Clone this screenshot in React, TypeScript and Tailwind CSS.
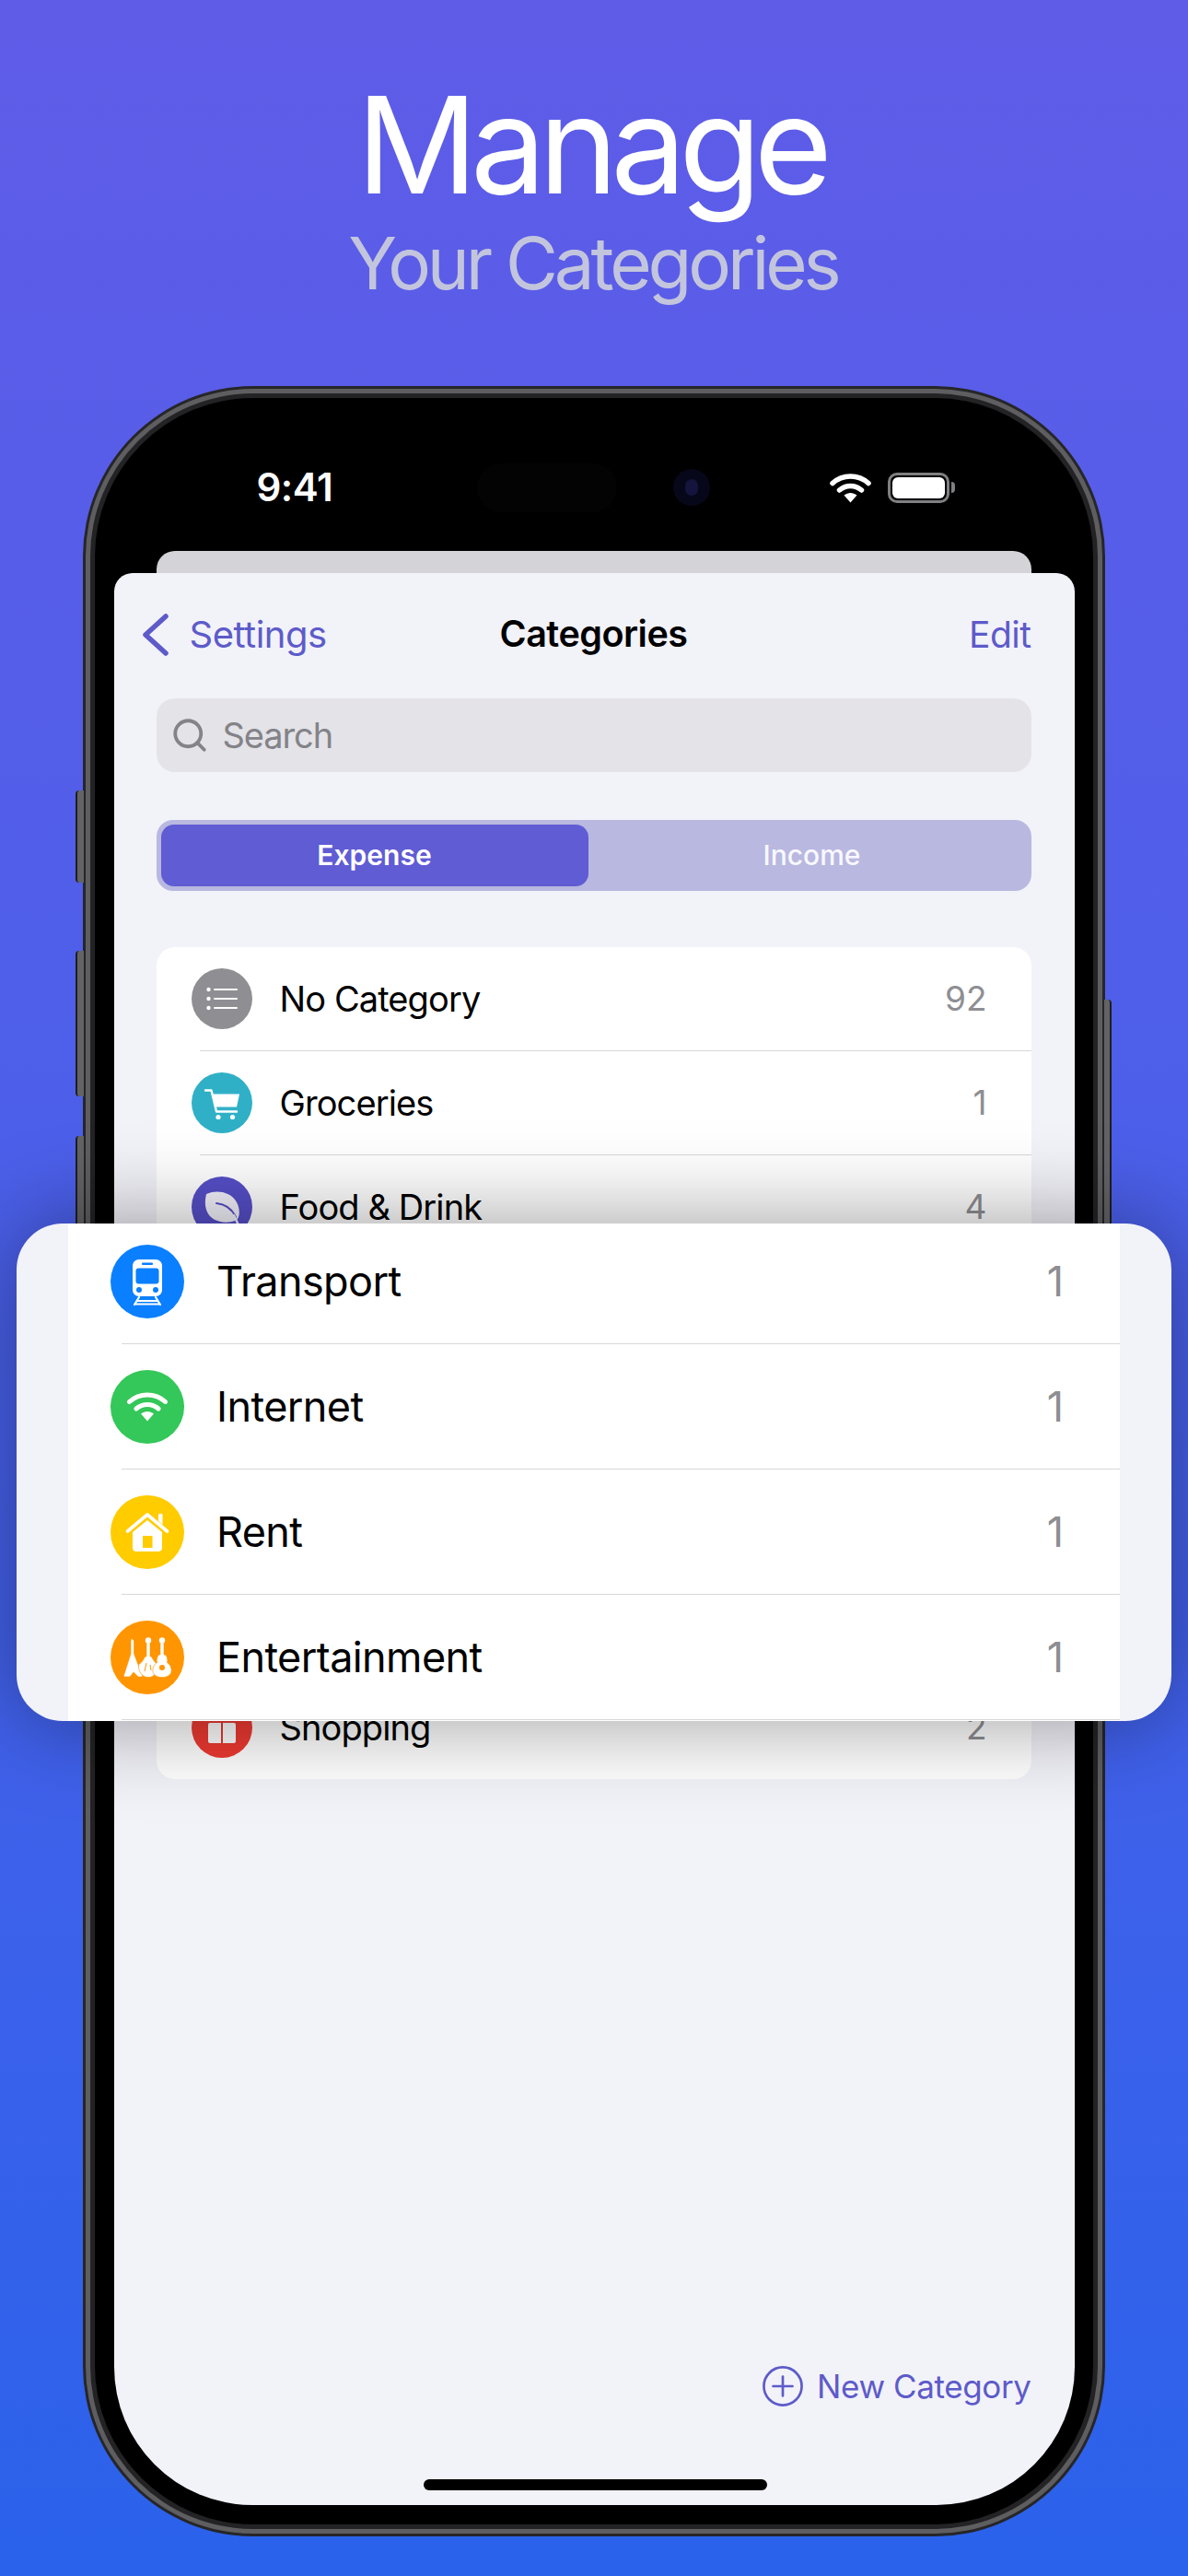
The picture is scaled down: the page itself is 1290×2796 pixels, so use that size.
import type { ReactNode } from "react";
import { Search } from "lucide-react";

type Category = {
  name: string;
  count: number;
  color: string;
  icon: ReactNode;
};

const WifiGlyph = ({ className, color = "white" }: { className: string; color?: string }) => (
  <svg viewBox="0 0 45 33" className={className} fill="none">
    <path d="M3 11.5C14 1.5 31 1.5 42 11.5" stroke={color} strokeWidth="5.5" strokeLinecap="round" />
    <path d="M10.5 19C17.5 13 27.5 13 34.5 19" stroke={color} strokeWidth="5.5" strokeLinecap="round" />
    <path d="M15.5 24.5C20 21 25 21 29.5 24.5L22.5 32.5Z" fill={color} />
  </svg>
);

const ListIcon = () => (
  <svg viewBox="0 0 66 66" className="w-full h-full" fill="none">
    <circle cx="18.5" cy="23" r="2.2" fill="white" />
    <circle cx="18.5" cy="33" r="2.2" fill="white" />
    <circle cx="18.5" cy="43" r="2.2" fill="white" />
    <path d="M25 23H49M25 33H49M25 43H49" stroke="white" strokeWidth="2" strokeLinecap="round" />
  </svg>
);

const CartIcon = () => (
  <svg viewBox="0 0 66 66" className="w-full h-full" fill="none">
    <path d="M15 19.5H21.5L27 42.5H49" stroke="white" strokeWidth="2.4" strokeLinecap="round" strokeLinejoin="round" />
    <path d="M23 23.5H52L49 37.5H26.5Z" fill="white" />
    <circle cx="29" cy="48.5" r="2.6" fill="white" />
    <circle cx="44.5" cy="48.5" r="2.6" fill="white" />
  </svg>
);

const LeafIcon = () => (
  <svg viewBox="0 0 66 66" className="w-full h-full" fill="none">
    <path d="M16 19C30 13 47 18 51 33C53 41 51 47 47 48C36 52 20 49 16 36C14 30 15 24 16 19Z" fill="#f4f3fc" />
    <path d="M27 29C36 30 44 35 48 44" stroke="#564fc9" strokeWidth="2" strokeLinecap="round" />
    <path d="M46 42C48 46 50 51 52 55" stroke="#f4f3fc" strokeWidth="2.5" strokeLinecap="round" />
  </svg>
);

const GiftIcon = () => (
  <svg viewBox="0 0 66 66" className="w-full h-full">
    <rect x="14" y="17" width="38" height="9" rx="2" fill="white" />
    <rect x="18" y="28" width="30" height="22" rx="2" fill="white" />
    <rect x="32" y="17" width="2" height="33" fill="#e5372f" />
  </svg>
);

const TrainIcon = () => (
  <svg viewBox="0 0 80 80" className="w-full h-full">
    <path d="M31 16H49C53 16 56 19 56 23V49C56 53 53 56 49 56H31C27 56 24 53 24 49V23C24 19 27 16 31 16Z" fill="white" />
    <rect x="27.5" y="25.5" width="25" height="17" rx="3" fill="#0a7fff" />
    <rect x="34" y="19.5" width="12" height="2.5" rx="1" fill="#0a7fff" />
    <circle cx="31" cy="49" r="3" fill="#0a7fff" />
    <circle cx="49" cy="49" r="3" fill="#0a7fff" />
    <path d="M31 57L26 65M49 57L54 65M29 61H51M27 64.5H53" stroke="white" strokeWidth="2.2" strokeLinecap="round" />
  </svg>
);

const HouseIcon = () => (
  <svg viewBox="0 0 80 80" className="w-full h-full" fill="none">
    <path d="M18.5 39L40 21L61.5 39" stroke="white" strokeWidth="3.6" strokeLinecap="round" strokeLinejoin="round" />
    <path d="M52 28V21.5C52 20.5 52.5 20 53.5 20H55C56 20 56.5 20.5 56.5 21.5V32Z" fill="white" />
    <path d="M40 27L56 40V57C56 59.5 54.5 61 52 61H28C25.5 61 24 59.5 24 57V40Z" fill="white" />
    <rect x="35" y="44" width="10.5" height="13" fill="#ffcc00" />
  </svg>
);

const GuitarsIcon = () => (
  <svg viewBox="0 0 80 80" className="w-full h-full" fill="white" stroke="#ff9500" strokeWidth="0.6">
    <path d="M23 19L25.5 22V36L35 61H30L25 56L21 61H14L22 36V22Z" />
    <path d="M39 24H43V39H44.5C46 43 49 46 51.5 48C52 55 48 61.5 41 61.5C34 61.5 30 55 30.5 48C33 46 36 43 37.5 39H39Z" />
    <circle cx="41" cy="21.5" r="3.2" stroke="none" />
    <path d="M54 24H58V37H59.5C61.5 39 62.5 43 61.5 45.5C66 48 68 56 64 59C62 61 58.5 61.5 56 61.5C53.5 61.5 50 61 48 59C44 56 46 48 50.5 45.5C49.5 43 50.5 39 52.5 37H54Z" />
    <circle cx="56" cy="21.5" r="3.2" stroke="none" />
    <circle cx="56" cy="51" r="3" fill="#ff9500" stroke="none" />
    <path d="M39 46L37 55M43 48L44 54" fill="none" strokeWidth="1" />
  </svg>
);

const WifiIcon = () => (
  <svg viewBox="0 0 80 80" className="w-full h-full">
    <svg x="17.5" y="23" width="45" height="33" viewBox="0 0 45 33">
      <path d="M3 11.5C14 1.5 31 1.5 42 11.5" stroke="white" strokeWidth="5" strokeLinecap="round" fill="none" />
      <path d="M10.5 19C17.5 13 27.5 13 34.5 19" stroke="white" strokeWidth="5" strokeLinecap="round" fill="none" />
      <path d="M15.5 24.5C20 21 25 21 29.5 24.5L22.5 32.5Z" fill="white" />
    </svg>
  </svg>
);

const popupCategories: Category[] = [
  { name: "Transport", count: 1, color: "bg-[#0a7fff]", icon: <TrainIcon /> },
  { name: "Internet", count: 1, color: "bg-[#34c759]", icon: <WifiIcon /> },
  { name: "Rent", count: 1, color: "bg-[#ffcc00]", icon: <HouseIcon /> },
  { name: "Entertainment", count: 1, color: "bg-[#ff9500]", icon: <GuitarsIcon /> },
];

const topCategories: Category[] = [
  { name: "No Category", count: 92, color: "bg-[#8e8e93]", icon: <ListIcon /> },
  { name: "Groceries", count: 1, color: "bg-[#30b0c7]", icon: <CartIcon /> },
  { name: "Food & Drink", count: 4, color: "bg-[#564fc9]", icon: <LeafIcon /> },
];

const shopping: Category = { name: "Shopping", count: 2, color: "bg-[#ee3a32]", icon: <GiftIcon /> };

const ListRow = ({ category }: { category: Category }) => (
  <div className="flex items-center h-[112px] pl-[38px] pr-[48px]">
    <div className={`w-[66px] h-[66px] rounded-full ${category.color}`}>{category.icon}</div>
    <span className="ml-[30px] text-[38px] text-black tracking-[-0.9px]">{category.name}</span>
    <span className="ml-auto text-[37px] text-[#8e8e93]">{category.count}</span>
  </div>
);

const StatusBar = () => (
  <div className="flex items-center h-[166px] pt-[28px] pl-[155px]">
    <span className="w-[85px] text-[42px] leading-none font-semibold text-white tracking-[-0.5px]">9:41</span>
    <div className="ml-[154px] w-[152px] h-[53px] rounded-full bg-[#030303]" />
    <div className="ml-[61px] w-[40px] h-[40px] rounded-full bg-[#07071a] flex items-center justify-center">
      <div className="w-[14px] h-[18px] rounded-full bg-[#14143c]" />
    </div>
    <WifiGlyph className="ml-[130px] w-[45px] h-[33px]" />
    <div className="ml-[18px] w-[67px] h-[33px] rounded-[10px] border-[3px] border-[#808083] p-[2px]">
      <div className="w-full h-full rounded-[6px] bg-white" />
    </div>
    <div className="ml-[2px] w-[4px] h-[12px] rounded-r-full bg-[#808083]" />
  </div>
);

const App = () => {
  return (
    <div className="relative w-[1290px] h-[2796px] overflow-hidden bg-gradient-to-b from-[#5f5ce8] to-[#2a62eb] font-['Inter',sans-serif]">
      <div className="flex flex-col items-center h-[419px] pt-[84px]">
        <h1 className="-ml-[7px] text-[146px] leading-[146px] font-normal text-white tracking-[-8px]">Manage</h1>
        <h2 className="mt-[12px] -ml-[2px] text-[78px] leading-[88px] font-normal text-[#c3c5dd] tracking-[-4.1px]">Your Categories</h2>
      </div>

      {/* phone */}
      <div className="relative ml-[90px] w-[1110px] h-[2334px] rounded-[185px] bg-[#262628] p-[3px]">
        <div className="absolute -left-[8px] top-[439px] w-[9px] h-[100px] rounded-l-[4px] bg-[#636365] border-l-2 border-[#1e1e20]" />
        <div className="absolute -left-[8px] top-[613px] w-[9px] h-[158px] rounded-l-[4px] bg-[#636365] border-l-2 border-[#1e1e20]" />
        <div className="absolute -left-[8px] top-[814px] w-[9px] h-[158px] rounded-l-[4px] bg-[#636365] border-l-2 border-[#1e1e20]" />
        <div className="absolute -right-[7px] top-[666px] w-[8px] h-[290px] rounded-r-[4px] bg-[#636365] border-r-2 border-[#1e1e20]" />

        <div className="h-full rounded-[182px] bg-[#5e5e60] p-[5px]">
          <div className="h-full rounded-[177px] bg-[#232325] p-[5px]">
            <div className="flex flex-col h-full rounded-[172px] bg-black px-[20.5px] pb-[21px]">
              <StatusBar />
              <div className="ml-[46px] mr-[47px] h-[24px] rounded-t-[20px] bg-[#d4d4d8]" />

              <div className="flex flex-col flex-1 rounded-t-[20px] rounded-b-[150px] bg-[#f2f2f9] pl-[46px] pr-[47px]">
                <div className="grid grid-cols-[1fr_auto_1fr] items-center h-[60px] mt-[37px]">
                  <div className="flex items-center gap-[23px] -ml-[16px]">
                    <svg viewBox="0 0 29 46" className="w-[29px] h-[46px]" fill="none">
                      <path d="M26 3L4 23L26 43" stroke="#5d5bc9" strokeWidth="5.5" strokeLinecap="round" strokeLinejoin="round" />
                    </svg>
                    <span className="text-[40px] text-[#5d5bc9] tracking-[-0.5px]">Settings</span>
                  </div>
                  <span className="text-[39.5px] font-semibold text-black tracking-[-0.5px]">Categories</span>
                  <span className="text-[39px] text-[#5d5bc9] text-right tracking-[-0.5px]">Edit</span>
                </div>

                <div className="flex items-center gap-[15px] h-[80px] mt-[39px] pl-[15px] rounded-[20px] bg-[#e3e3e8]">
                  <Search size={42} strokeWidth={2.2} className="text-[#838388]" />
                  <span className="text-[38px] text-[#838388] tracking-[-1.1px]">Search</span>
                </div>

                <div className="flex h-[77px] mt-[52px] p-[5px] rounded-[18px] bg-[#b8b8e0]">
                  <div className="flex items-center justify-center w-[464px] rounded-[14px] bg-[#605cd4] text-[30px] font-semibold text-white">
                    Expense
                  </div>
                  <div className="flex items-center justify-center flex-1 pl-[10px] text-[30px] font-medium text-[#f8f8ff]">
                    Income
                  </div>
                </div>

                <div className="mt-[61px] rounded-[20px] bg-white">
                  {topCategories.map((category) => (
                    <div key={category.name}>
                      <ListRow category={category} />
                      <div className="h-px ml-[47px] bg-[#d8d8dc]" />
                    </div>
                  ))}
                  {/* the four rows that sit under the floating card */}
                  <div className="h-[452px]" />
                  <ListRow category={shopping} />
                </div>

                <div className="flex-1" />

                <div className="flex items-center justify-end gap-[15px] h-[46px]">
                  <svg viewBox="0 0 46 46" className="w-[44px] h-[44px]" fill="none">
                    <circle cx="23" cy="23" r="21.5" stroke="#5d5bc9" strokeWidth="2.8" />
                    <path d="M23 12V34M12 23H34" stroke="#5d5bc9" strokeWidth="2.8" strokeLinecap="round" />
                  </svg>
                  <span className="text-[35px] text-[#5d5bc9] tracking-[-0.4px]">New Category</span>
                </div>

                <div className="flex justify-center pl-[3px] mt-[78px] mb-[16px]">
                  <div className="w-[373px] h-[12px] rounded-full bg-black" />
                </div>
              </div>
            </div>
          </div>
        </div>
      </div>

      {/* floating rows */}
      <div className="absolute left-[18px] top-[1328px] w-[1254px] h-[540px] overflow-hidden rounded-[50px] bg-[#f2f2f9] px-[56px] shadow-[0_0_100px_rgba(0,0,0,0.4)]">
        <div className="-mt-[5px] h-[545px] bg-white">
          {popupCategories.map((category) => (
            <div key={category.name}>
              <div className="flex items-center h-[135px] pl-[46px] pr-[61px]">
                <div className={`w-[80px] h-[80px] rounded-full ${category.color}`}>{category.icon}</div>
                <span className="ml-[35px] text-[45px] text-black tracking-[-0.6px]">{category.name}</span>
                <span className="ml-auto text-[45px] text-[#8e8e93]">{category.count}</span>
              </div>
              <div className="h-px ml-[58px] bg-[#d8d8dc]" />
            </div>
          ))}
        </div>
      </div>
    </div>
  );
};

export default App;
